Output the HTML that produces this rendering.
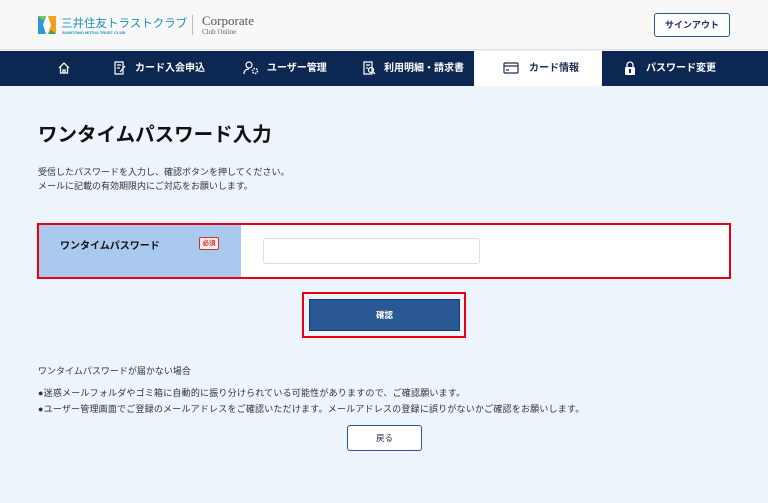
<!DOCTYPE html>
<html><head><meta charset="utf-8"><style>
*{margin:0;padding:0;box-sizing:border-box}
body{width:768px;height:503px;overflow:hidden;background:#edf4fb;font-family:"Liberation Sans","Noto Sans CJK JP",sans-serif;color:#222;position:relative}
.abs{position:absolute}
.hdr{left:0;top:0;width:768px;height:50px;background:#f8f8f8;border-bottom:1px solid #ddd}
.nav{left:0;top:51px;width:768px;height:35px;background:#0d2753}
.ni{position:absolute;top:0;height:35px;line-height:35px;color:#fff;font-size:10px;font-weight:bold;white-space:nowrap}
.act{left:474px;width:128px;background:#fff;color:#1d2f55}
</style></head><body>
<div class="abs hdr">
  <svg class="abs" style="left:38px;top:16px" width="18" height="18" viewBox="0 0 18 18">
    <path d="M0 0h8l-3 9 3 9H0z" fill="#2a9bd6"/><path d="M18 0h-8l3 9-3 9h8z" fill="#f4a01e"/>
    <path d="M0 0h8l-3 4z" fill="#8cc63f"/><path d="M18 18h-8l3-4z" fill="#2ba36b"/>
    <circle cx="9" cy="9" r="3" fill="#fff"/>
  </svg>
  <div class="abs" style="left:61px;top:15px;font-size:11.5px;color:#1a8fb8;white-space:nowrap">三井住友トラストクラブ</div>
  <div class="abs" style="left:62px;top:30px;font-size:4px;color:#1a8fb8;font-weight:bold;white-space:nowrap">SUMITOMO MITSUI TRUST CLUB</div>
  <div class="abs" style="left:192px;top:15px;width:1px;height:20px;background:#bbb"></div>
  <div class="abs" style="left:202px;top:13px;font-family:'Liberation Serif',serif;font-size:13px;color:#555">Corporate</div>
  <div class="abs" style="left:202px;top:28px;font-family:'Liberation Serif',serif;font-size:7px;color:#666">Club Online</div>
  <div class="abs" style="left:654px;top:13px;width:76px;height:24px;border:1px solid #2a5894;border-radius:3px;background:#fff;font-size:9px;font-weight:bold;color:#1d2f55;text-align:center;line-height:22px">サインアウト</div>
</div>
<div class="abs nav">
  <div class="ni" style="left:57px"><svg width="14" height="14" viewBox="0 0 14 14" style="vertical-align:middle"><path d="M2 7L7 2l5 5M3.5 6v6h7V6M6 12V9h2v3" stroke="#fff" stroke-width="1.3" fill="none"/></svg></div>
  <div class="ni" style="left:113px"><svg width="14" height="14" viewBox="0 0 14 14" style="vertical-align:middle;margin-right:8px"><path d="M2 1h8v12H2zM4 4h4M4 7h3M7 11l5-6" stroke="#fff" stroke-width="1.2" fill="none"/></svg>カード入会申込</div>
  <div class="ni" style="left:243px"><svg width="16" height="14" viewBox="0 0 16 14" style="vertical-align:middle;margin-right:8px"><circle cx="6" cy="4" r="3" stroke="#fff" fill="none" stroke-width="1.2"/><path d="M1 13c0-4 3-5 5-5" stroke="#fff" fill="none" stroke-width="1.2"/><circle cx="12" cy="10" r="2.5" stroke="#fff" fill="none" stroke-width="1.5" stroke-dasharray="1.5 1"/></svg>ユーザー管理</div>
  <div class="ni" style="left:362px"><svg width="14" height="14" viewBox="0 0 14 14" style="vertical-align:middle;margin-right:8px"><path d="M2 1h8v12H2zM4 4h4M4 7h2" stroke="#fff" stroke-width="1.2" fill="none"/><circle cx="9" cy="9" r="2.5" stroke="#fff" fill="none" stroke-width="1.2"/><path d="M11 11l2 2" stroke="#fff" stroke-width="1.3"/></svg>利用明細・請求書</div>
  <div class="ni act" style="padding-left:29px"><svg width="16" height="12" viewBox="0 0 16 12" style="vertical-align:middle;margin-right:10px"><rect x="1" y="1" width="14" height="10" rx="1" stroke="#1d2f55" fill="none" stroke-width="1.2"/><path d="M1 4h14M3 8h3" stroke="#1d2f55" stroke-width="1.2"/></svg>カード情報</div>
  <div class="ni" style="left:624px"><svg width="12" height="15" viewBox="0 0 12 15" style="vertical-align:middle;margin-right:10px"><path d="M3 6V4a3 3 0 016 0v2" stroke="#fff" fill="none" stroke-width="1.3"/><rect x="1" y="6" width="10" height="8" rx="1" fill="#fff"/><rect x="5" y="8" width="2" height="4" fill="#0d2753"/></svg>パスワード変更</div>
</div>
<div class="abs" style="left:38px;top:118px;font-size:19.5px;font-weight:bold;color:#111;white-space:nowrap">ワンタイムパスワード入力</div>
<div class="abs" style="left:38px;top:165px;font-size:9px;line-height:14px;color:#333;white-space:nowrap">受信したパスワードを入力し、確認ボタンを押してください。<br>メールに記載の有効期限内にご対応をお願いします。</div>
<div class="abs" style="left:37px;top:223px;width:694px;height:56px;border:2px solid #e60012;background:#fff">
  <div class="abs" style="left:0;top:0;width:202px;height:52px;background:#aac9ee"></div>
  <div class="abs" style="left:21px;top:12px;font-size:10px;font-weight:bold;color:#111;white-space:nowrap">ワンタイムパスワード</div>
  <div class="abs" style="left:160px;top:12px;width:20px;height:13px;border:1px solid #c0392b;border-radius:2px;background:#fdeaea;color:#c0392b;font-size:6.5px;font-weight:bold;text-align:center;line-height:11px">必須</div>
  <div class="abs" style="left:224px;top:13px;width:217px;height:26px;border:1px solid #ddd;border-radius:3px;background:#fff"></div>
</div>
<div class="abs" style="left:302px;top:292px;width:164px;height:46px;border:2px solid #e60012"></div>
<div class="abs" style="left:309px;top:299px;width:151px;height:32px;background:#2a5894;border:1px solid #173d75;color:#fff;font-size:8.5px;font-weight:bold;text-align:center;line-height:30px">確認</div>
<div class="abs" style="left:38px;top:364px;font-size:9px;color:#333;white-space:nowrap">ワンタイムパスワードが届かない場合</div>
<div class="abs" style="left:38px;top:385px;font-size:9px;letter-spacing:0.2px;line-height:16px;color:#333;white-space:nowrap">●迷惑メールフォルダやゴミ箱に自動的に振り分けられている可能性がありますので、ご確認願います。<br>●ユーザー管理画面でご登録のメールアドレスをご確認いただけます。メールアドレスの登録に誤りがないかご確認をお願いします。</div>
<div class="abs" style="left:347px;top:425px;width:75px;height:26px;border:1px solid #2a5894;border-radius:3px;background:#fff;font-size:8.5px;color:#1d2f55;text-align:center;line-height:24px">戻る</div>
</body></html>
